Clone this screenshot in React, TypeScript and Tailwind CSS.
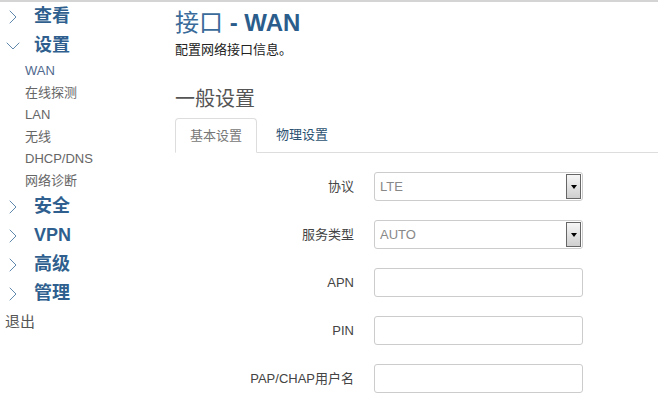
import { ChevronDown, ChevronRight } from "lucide-react";

const font = { fontFamily: '"Liberation Sans", "Noto Sans CJK SC", sans-serif' };

const subItems = ["WAN", "在线探测", "LAN", "无线", "DHCP/DNS", "网络诊断"];
const groups = ["安全", "VPN", "高级", "管理"];

function NavGroup({ label, open = false }: { label: string; open?: boolean }) {
  return (
    <div className="flex h-[29px] items-center">
      <span className="ml-[1px] w-[33px]">
        {open ? (
          <ChevronDown size={24} strokeWidth={0.9} className="text-[#4d7aa3]" />
        ) : (
          <ChevronRight size={24} strokeWidth={0.9} className="text-[#4d7aa3]" />
        )}
      </span>
      <span className="text-[18px] font-bold text-[#2f5f8e]">{label}</span>
    </div>
  );
}

function Select({ value }: { value: string }) {
  return (
    <div className="relative flex h-[29px] w-[209px] items-center rounded-[3px] border border-[#ccc] bg-white pl-[5px] text-[13px] text-[#888]">
      {value}
      <div className="absolute right-[1px] top-[1px] flex h-[25px] w-[15px] items-center justify-center border border-[#666] bg-gradient-to-b from-[#f6f6f6] to-[#cfcfcf]">
        <span className="block h-0 w-0 border-x-[3px] border-t-[4px] border-x-transparent border-t-black" />
      </div>
    </div>
  );
}

function Field({ label, children }: { label: string; children: React.ReactNode }) {
  return (
    <div className="flex h-[29px] items-center">
      <div className="w-[179px] text-right text-[13px] text-[#444]">{label}</div>
      <div className="ml-[20px]">{children}</div>
    </div>
  );
}

function Input() {
  return <div className="h-[29px] w-[209px] rounded-[3px] border border-[#ccc] bg-white" />;
}

export default function App() {
  return (
    <div className="h-[396px] w-[658px] overflow-hidden border-t-2 border-[#d4d4d4] bg-white" style={font}>
      <div className="flex">
        <nav className="w-[175px] shrink-0">
          <NavGroup label="查看" />
          <NavGroup label="设置" open />
          <div className="pl-[25px] text-[13px] text-[#666]">
            {subItems.map((s, i) => (
              <div key={s} className={`flex h-[22px] items-center ${i === 0 ? "text-[#50698e]" : ""}`}>
                {s}
              </div>
            ))}
          </div>
          {groups.map((g) => (
            <NavGroup key={g} label={g} />
          ))}
          <div className="flex h-[28px] items-center pl-[5px] text-[15px] text-[#555]">退出</div>
        </nav>

        <main className="flex-1">
          <h2 className="mt-[7px] text-[24px] leading-[28px] text-[#3a6b9a]">
            接口 <span className="font-bold text-[#2b5d8c]">- WAN</span>
          </h2>
          <p className="mt-[5px] text-[13px] leading-[16px] text-[#222]">配置网络接口信息。</p>
          <h3 className="mt-[29px] text-[20px] leading-[24px] text-[#555]">一般设置</h3>

          <div className="mt-[7px] flex h-[35px] items-end border-b border-[#ddd]">
            <div className="-mb-px flex h-[35px] w-[82px] items-center justify-center rounded-t-[4px] border border-b-white border-[#ddd] bg-white text-[13px] text-[#777]">
              基本设置
            </div>
            <div className="flex h-[35px] items-center px-[19px] text-[13px] text-[#2c5272]">物理设置</div>
          </div>

          <div className="mt-[19px] flex flex-col gap-[19px]">
            <Field label="协议">
              <Select value="LTE" />
            </Field>
            <Field label="服务类型">
              <Select value="AUTO" />
            </Field>
            <Field label="APN">
              <Input />
            </Field>
            <Field label="PIN">
              <Input />
            </Field>
            <Field label="PAP/CHAP用户名">
              <Input />
            </Field>
          </div>
        </main>
      </div>
    </div>
  );
}
